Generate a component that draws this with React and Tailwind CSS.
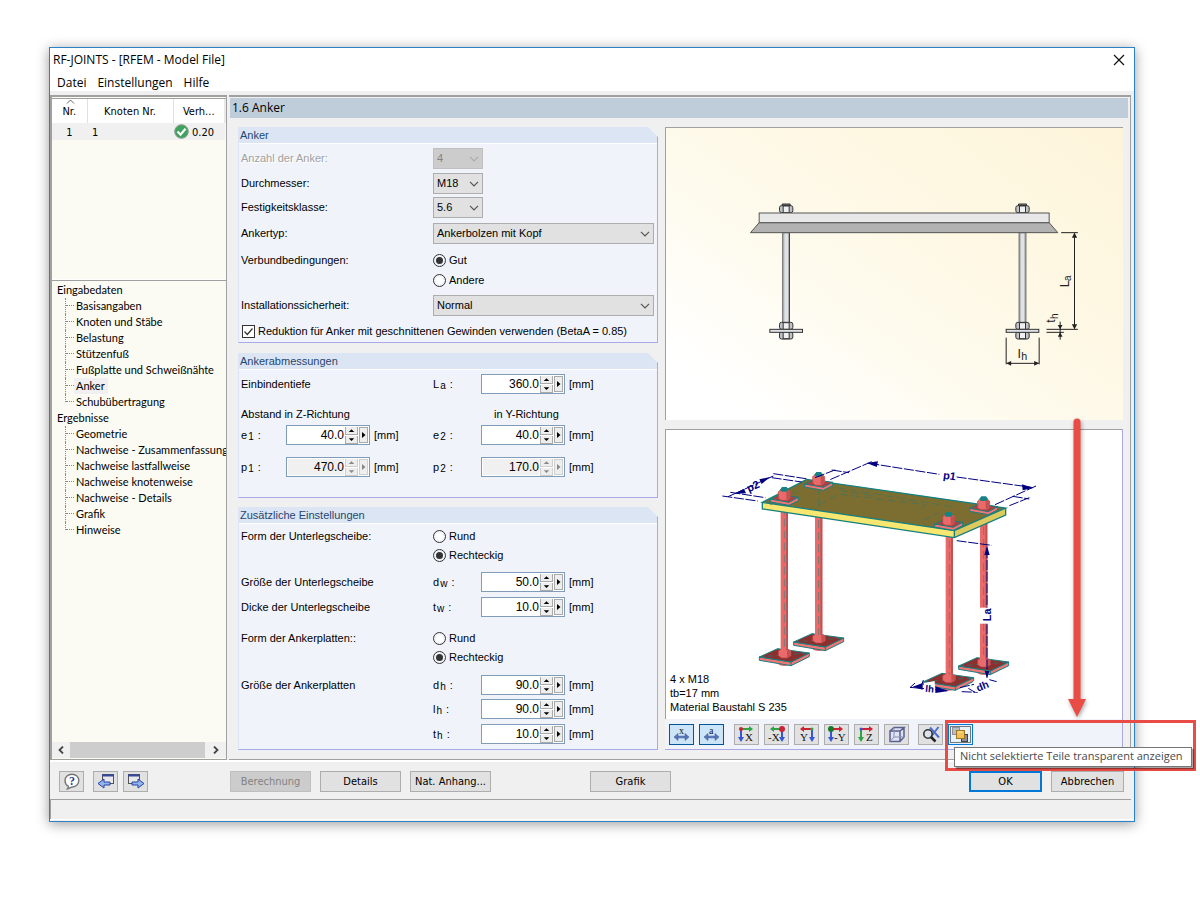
import { useState } from "react";

const INPUT_PAGES = [
  "Basisangaben",
  "Knoten und Stäbe",
  "Belastung",
  "Stützenfuß",
  "Fußplatte und Schweißnähte",
  "Anker",
  "Schubübertragung",
];

const RESULT_PAGES = [
  "Geometrie",
  "Nachweise - Zusammenfassung",
  "Nachweise lastfallweise",
  "Nachweise knotenweise",
  "Nachweise - Details",
  "Grafik",
  "Hinweise",
];

export default function App() {
  return (
    <div className="min-h-screen bg-white pt-[47px] pr-[65px] pb-10 pl-[49px] font-['DejaVu_Sans_Condensed','DejaVu_Sans',sans-serif] text-[11px] text-black">
      <div className="border border-[#2a82c9] bg-[#f0f0f0] shadow-[0_2px_12px_rgba(0,0,0,0.4)]">
        <TitleBar />
        <div className="mt-1 flex">
          <Sidebar />
          <main className="ml-[2px] min-w-0 flex-1 border-t-2 border-r border-b border-[#a0a0a0] pb-[9px]">
            <h1 className="mt-px mr-[2px] ml-px h-5 bg-[#bfcddb] pl-[2px] font-['Open_Sans',sans-serif] text-xs leading-5">
              1.6 Anker
            </h1>
            <div className="mt-[9px] flex gap-[7px] pr-[7px] pl-[9px]">
              <div className="flex w-[420px] shrink-0 flex-col">
                <AnchorGroup />
                <DimensionsGroup />
                <SettingsGroup />
              </div>
              <Preview />
            </div>
          </main>
          <div className="w-[3px] shrink-0" />
        </div>
        <ButtonBar />
        <div className="mr-[3px] h-5 border-t border-l border-[#a0a0a0]" />
        <div className="h-[2px] border-t border-white" />
      </div>
    </div>
  );
}

function TitleBar() {
  return (
    <header className="bg-white font-['Open_Sans',sans-serif] text-xs">
      <div className="flex h-6 items-center justify-between pr-[9px] pl-[3px]">
        <span>RF-JOINTS - [RFEM - Model File]</span>
        <button type="button" aria-label="Schließen">
          <svg width="12" height="12" viewBox="0 0 12 12" className="block">
            <path d="M1 1l10 10M11 1L1 11" stroke="#111" strokeWidth="1.2" />
          </svg>
        </button>
      </div>
      <nav className="flex h-[19px] items-center gap-[11px] pt-[2px] pl-[7px]">
        <button type="button">Datei</button>
        <button type="button">Einstellungen</button>
        <button type="button">Hilfe</button>
      </nav>
    </header>
  );
}

function Sidebar() {
  return (
    <aside className="flex w-[177px] shrink-0 flex-col border-t-2 border-r border-b border-l-2 border-[#a0a0a0] bg-[#fbfbf3]">
      <div className="mt-px h-[182px] border-t border-b border-t-[#a0a0a0] border-b-white">
        <table className="w-full table-fixed text-left">
          <thead>
            <tr className="h-6 bg-white">
              <th className="relative w-[35px] border-r border-[#e0e0e0] pt-[2px] text-center font-normal">
                <svg width="9" height="5" viewBox="0 0 9 5" className="absolute top-0 left-[14px]">
                  <path d="M1 4.500l3.500-3.500 3.500 3.500" fill="none" stroke="#666" />
                </svg>
                Nr.
              </th>
              <th className="w-[86px] border-r border-[#e0e0e0] pt-[2px] text-center font-normal">
                Knoten Nr.
              </th>
              <th className="border-r-2 border-[#e8e8e8] pt-[2px] text-center font-normal">
                Verh...
              </th>
            </tr>
          </thead>
          <tbody>
            <tr className="h-[17px] bg-[#f0f0f0] leading-[15px]">
              <td className="pt-[2px] text-center">1</td>
              <td className="pt-[2px] pl-[5px]">1</td>
              <td>
                <span className="flex items-center gap-[3px] pl-px">
                  <svg width="15" height="15" viewBox="0 0 15 15">
                    <circle cx="7.500" cy="7.500" r="6.800" fill="#3fa35f" stroke="#8a9a8e" />
                    <path d="M3.500 7.500l3 3.200 5-6" fill="none" stroke="#fff" strokeWidth="2.200" />
                  </svg>
                  <span className="pt-[2px]">0.20</span>
                </span>
              </td>
            </tr>
          </tbody>
        </table>
      </div>
      <nav className="flex-1 overflow-hidden border-t border-[#a0a0a0] pt-px pl-[5px] font-[Lato,sans-serif]">
        <TreeBranch title="Eingabedaten" pages={INPUT_PAGES} />
        <TreeBranch title="Ergebnisse" pages={RESULT_PAGES} />
      </nav>
      <div className="mb-px flex h-4 items-center bg-[#f0f0f0]">
        <button type="button" aria-label="Nach links" className="flex w-[18px] justify-center">
          <svg width="6" height="8" viewBox="0 0 6 8">
            <path d="M5 .5L1.500 4 5 7.500" fill="none" stroke="#444" strokeWidth="1.800" />
          </svg>
        </button>
        <div className="h-4 w-[135px] bg-[#cdcdcd]" />
        <button type="button" aria-label="Nach rechts" className="flex flex-1 justify-center">
          <svg width="6" height="8" viewBox="0 0 6 8">
            <path d="M1 .5L4.500 4 1 7.500" fill="none" stroke="#444" strokeWidth="1.800" />
          </svg>
        </button>
      </div>
    </aside>
  );
}

function TreeBranch({ title, pages }) {
  return (
    <div className="leading-4 whitespace-nowrap">
      <div>{title}</div>
      <ul className="pl-2">
        {pages.map((page, i) => (
          <li key={page} className="flex h-4">
            <span
              className={`w-px shrink-0 border-l border-dotted border-[#888] ${
                i === pages.length - 1 ? "h-2" : "h-4"
              }`}
            />
            <span className="h-2 w-2 shrink-0 border-b border-dotted border-[#888]" />
            <a
              href={`#${page}`}
              className={page === "Anker" ? "bg-[#f0f0f2] pr-[3px] pl-[2px]" : "pl-[2px]"}
            >
              {page}
            </a>
          </li>
        ))}
      </ul>
    </div>
  );
}

/* ---- form building blocks ---- */

function Group({ title, className, children }) {
  return (
    <section
      className={`border-r border-b border-l border-r-[#a9a9e8] border-b-[#a9a9e8] border-l-[#dce5f4] bg-[#f0f4fa] font-['Liberation_Sans',sans-serif] [clip-path:polygon(0_0,calc(100%-10px)_0,100%_10px,100%_100%,0_100%)] ${className}`}
    >
      <h2 className="h-[17px] border-b border-white bg-[#dce5f4] pl-px leading-4 text-[#1f4770]">
        {title}
      </h2>
      <div className="pl-[2px]">{children}</div>
    </section>
  );
}

function Row({ label, htmlFor, className, children }) {
  return (
    <div className={`flex items-center ${className}`}>
      <label htmlFor={htmlFor} className="w-[192px] shrink-0">
        {label}
      </label>
      {children}
    </div>
  );
}

function Dropdown({ id, value, wide, disabled }) {
  return (
    <div className={`relative h-[21px] ${wide ? "w-[221px]" : "w-[50px]"}`}>
      <select
        id={id}
        disabled={disabled}
        defaultValue={value}
        className={`block h-full w-full appearance-none rounded-none border pl-[3px] ${
          disabled
            ? "border-[#bfbfbf] bg-[#cccccc] text-[#838383] opacity-100"
            : "border-[#adadad] bg-[#e1e1e1]"
        }`}
      >
        <option>{value}</option>
      </select>
      <svg
        width="10"
        height="6"
        viewBox="0 0 10 6"
        className="pointer-events-none absolute top-2 right-1"
      >
        <path d="M1 .8l4 4 4-4" fill="none" stroke={disabled ? "#aaa" : "#555"} strokeWidth="1.200" />
      </svg>
    </div>
  );
}

function Radio({ name, label, checked }) {
  return (
    <label className="flex items-center gap-[3px]">
      <input
        type="radio"
        name={name}
        defaultChecked={checked}
        className="h-[13px] w-[13px] appearance-none rounded-full border border-[#333] bg-white bg-clip-content p-[2px] checked:bg-[#333]"
      />
      {label}
    </label>
  );
}

function Sym({ base, sub }) {
  return (
    <>
      {base}
      <span className="relative top-px mx-px text-[10px]">{sub}</span> :
    </>
  );
}

function NumberField({ id, base, sub, value, disabled, near }) {
  return (
    <div className={`flex items-center ${near ? "w-[192px]" : ""}`}>
      <label htmlFor={id} className={near ? "w-[45px] shrink-0" : "w-12 shrink-0"}>
        <Sym base={base} sub={sub} />
      </label>
      <div className="flex h-5 w-[84px] border border-[#7f9db9] bg-white p-px">
        <input
          id={id}
          type="text"
          defaultValue={value}
          disabled={disabled}
          className={`w-[57px] min-w-0 text-right text-xs ${disabled ? "bg-[#f0f0f0]" : "bg-white"}`}
        />
        <span className="ml-px flex w-[13px] shrink-0 flex-col gap-px">
          <StepButton label="Erhöhen" d="M6 2l3 3H3z" disabled={disabled} />
          <StepButton label="Verringern" d="M3 2h6l-3 3z" disabled={disabled} />
        </span>
        <button
          type="button"
          aria-label="Auswahl"
          disabled={disabled}
          className={`ml-px w-[9px] shrink-0 border bg-[#eeeeee] ${
            disabled ? "border-[#cfcfcf]" : "border-[#aaaaaa]"
          }`}
        >
          <svg width="7" height="14" viewBox="0 0 7 14">
            <path d="M2 4l3.500 3L2 10z" fill={disabled ? "#888" : "#000"} />
          </svg>
        </button>
      </div>
      <span className="ml-1">[mm]</span>
    </div>
  );
}

function StepButton({ label, d, disabled }) {
  return (
    <button
      type="button"
      aria-label={label}
      disabled={disabled}
      className={`flex-1 border-r border-b border-l bg-[#eeeeee] ${
        disabled ? "border-[#cfcfcf]" : "border-[#aaaaaa]"
      }`}
    >
      <svg width="11" height="7" viewBox="0 0 12 7" className="block">
        <path d={d} fill={disabled ? "#888" : "#000"} />
      </svg>
    </button>
  );
}

function AnchorGroup() {
  return (
    <Group title="Anker" className="h-[216px]">
      <div className="pt-[2px]">
        <Row
          className="h-[25px] text-[#a0a0a0] [text-shadow:1px_1px_0_#fff]"
          label="Anzahl der Anker:"
          htmlFor="count"
        >
          <Dropdown id="count" value="4" disabled />
        </Row>
        <Row className="h-[25px]" label="Durchmesser:" htmlFor="diameter">
          <Dropdown id="diameter" value="M18" />
        </Row>
        <Row className="h-[23px]" label="Festigkeitsklasse:" htmlFor="grade">
          <Dropdown id="grade" value="5.6" />
        </Row>
        <Row className="h-[29px]" label="Ankertyp:" htmlFor="type">
          <Dropdown id="type" value="Ankerbolzen mit Kopf" wide />
        </Row>
        <Row className="h-6" label="Verbundbedingungen:">
          <Radio name="bond" label="Gut" checked />
        </Row>
        <Row className="h-[17px]">
          <Radio name="bond" label="Andere" />
        </Row>
        <Row className="h-[33px]" label="Installationssicherheit:" htmlFor="safety">
          <Dropdown id="safety" value="Normal" wide />
        </Row>
        <label className="flex h-[18px] items-center gap-[3px] pl-px">
          <ThreadCheck />
          Reduktion für Anker mit geschnittenen Gewinden verwenden (BetaA = 0.85)
        </label>
      </div>
    </Group>
  );
}

function ThreadCheck() {
  const [on, setOn] = useState(true);
  return (
    <span className="relative h-[13px] w-[13px]">
      <input
        type="checkbox"
        checked={on}
        onChange={(e) => setOn(e.target.checked)}
        className="block h-[13px] w-[13px] appearance-none border border-[#333] bg-white"
      />
      {on && (
        <svg
          width="13"
          height="13"
          viewBox="0 0 13 13"
          className="pointer-events-none absolute inset-0"
        >
          <path d="M2.500 6.500l2.800 3 5.200-6" fill="none" stroke="#333" strokeWidth="1.200" />
        </svg>
      )}
    </span>
  );
}

function DimensionsGroup() {
  return (
    <Group title="Ankerabmessungen" className="mt-[10px] h-[145px]">
      <Row className="h-7" label="Einbindentiefe" htmlFor="la">
        <NumberField id="la" base="L" sub="a" value="360.0" />
      </Row>
      <div className="mt-2 flex h-4 items-center">
        <span className="w-[253px]">Abstand in Z-Richtung</span>
        <span>in Y-Richtung</span>
      </div>
      <div className="mt-[3px] flex h-5">
        <NumberField id="e1" base="e" sub="1" value="40.0" near />
        <NumberField id="e2" base="e" sub="2" value="40.0" />
      </div>
      <div className="mt-3 flex h-5">
        <NumberField id="p1" base="p" sub="1" value="470.0" near disabled />
        <NumberField id="p2" base="p" sub="2" value="170.0" disabled />
      </div>
    </Group>
  );
}

function SettingsGroup() {
  return (
    <Group title="Zusätzliche Einstellungen" className="mt-[9px] h-[243px]">
      <div className="pt-[3px]">
        <Row className="h-[19px]" label="Form der Unterlegscheibe:">
          <Radio name="washer" label="Rund" />
        </Row>
        <Row className="h-[19px]">
          <Radio name="washer" label="Rechteckig" checked />
        </Row>
        <Row className="mt-[7px] h-5" label="Größe der Unterlegscheibe" htmlFor="dw">
          <NumberField id="dw" base="d" sub="w" value="50.0" />
        </Row>
        <Row className="mt-[5px] h-5" label="Dicke der Unterlegscheibe" htmlFor="tw">
          <NumberField id="tw" base="t" sub="w" value="10.0" />
        </Row>
        <Row className="mt-3 h-[19px]" label="Form der Ankerplatten::">
          <Radio name="plate" label="Rund" />
        </Row>
        <Row className="h-[19px]">
          <Radio name="plate" label="Rechteckig" checked />
        </Row>
        <Row className="mt-2 h-5" label="Größe der Ankerplatten" htmlFor="dh">
          <NumberField id="dh" base="d" sub="h" value="90.0" />
        </Row>
        <Row className="mt-1 h-5">
          <NumberField id="lh" base="l" sub="h" value="90.0" />
        </Row>
        <Row className="mt-[5px] h-5">
          <NumberField id="th" base="t" sub="h" value="10.0" />
        </Row>
      </div>
    </Group>
  );
}

/* ---- graphics on the right ---- */

function Preview() {
  return (
    <div className="flex min-w-0 flex-1 flex-col">
      <div className="h-[293px] border-t border-l border-[#a0a0a0] bg-[linear-gradient(215deg,#fdf4da_0%,#fef8e4_35%,#fefbee_60%,#ffffff_90%)]">
        <SectionDrawing />
      </div>
      <div className="relative mt-[9px] border-r border-b border-[#a9a9e8] bg-[#f0f4fa]">
        <div className="relative h-[290px] border-t border-l border-[#a0a0a0] bg-white">
          <ModelDrawing />
          <div className="absolute bottom-[5px] left-1 font-['Liberation_Sans',sans-serif] leading-[14px]">
            <p>4 x M18</p>
            <p>tb=17 mm</p>
            <p>Material Baustahl S 235</p>
          </div>
        </div>
        <ViewToolbar />
        <Arrow />
      </div>
    </div>
  );
}

function Nut({ x, y, flip }) {
  return (
    <g transform={`translate(${x} ${y}) scale(1 ${flip ? -1 : 1})`} strokeWidth="3">
      {!flip && <path d="M-12-20v-7h24v7z" fill="#777" stroke="#333" strokeLinejoin="round" />}
      <rect x="-20" y="-22" width="40" height="21" rx="6" fill="#bfc3c6" stroke="#333" />
      <rect x="-9" y="-21" width="18" height="20" fill="#f0f0f0" stroke="#333" />
    </g>
  );
}

function Anchor({ x }) {
  return (
    <g>
      <rect x={x - 10} y="338" width="20" height="272" fill="#dfe3e5" stroke="#444" strokeWidth="3" />
      <path d={`M${x - 7} 338v270M${x + 7} 338v270`} stroke="#a9adb0" strokeWidth="3" />
      <Nut x={x} y={279} />
      <rect x={x - 20} y="607" width="40" height="21" rx="6" fill="#bfc3c6" stroke="#333" />
      <rect x={x - 9} y="608" width="18" height="20" fill="#f0f0f0" stroke="#333" />
      <Nut x={x} y={635} flip />
      <rect x={x - 49} y="628" width="98" height="9" fill="#dfe3e5" stroke="#333" strokeWidth="3" />
    </g>
  );
}

function SectionDrawing() {
  return (
    <svg
      viewBox="18 24 1368 876"
      className="block h-full w-full font-['Liberation_Sans',sans-serif]"
      stroke="#222"
      strokeWidth="3"
      aria-label="Schnitt durch die Fußplatte"
    >
      <Anchor x={377} />
      <Anchor x={1086} />
      <path d="M296 308h870l26 30H270z" fill="#b2b2b2" stroke="#555" />
      <rect x="296" y="279" width="870" height="29" fill="#e8e8e8" stroke="#555" />
      <path d="M1202 338h50M1242 340v286M1158 628h94M1158 637h52M1199 605v54" />
      <path d="M1037 653v80M1136 653v80M1040 730h94" />
      <path
        d="M1242 338l-8 15h16zM1242 628l-8-15h16zM1199 628l-7-13h14zM1199 637l-7 13h14zM1037 730l15-7v14zM1136 730l-15-7v14z"
        fill="#222"
        stroke="none"
      />
      <g fill="#222" stroke="none">
        <text x="1072" y="713" fontSize="40">l</text>
        <text x="1082" y="721" fontSize="32">h</text>
        <text transform="translate(1224 502) rotate(-90)" fontSize="38">L</text>
        <text transform="translate(1231 483) rotate(-90)" fontSize="30">a</text>
        <text transform="translate(1184 608) rotate(-90)" fontSize="36">t</text>
        <text transform="translate(1192 597) rotate(-90)" fontSize="30">h</text>
      </g>
    </svg>
  );
}

function Rod({ x, top, bottom }) {
  return (
    <g>
      <rect x={x - 11} y={top} width="22" height={bottom - top} fill="#ea6a6a" />
      <rect x={x + 5} y={top} width="6" height={bottom - top} fill="#c25252" />
      <path d={`M${x} ${top}V${bottom}`} stroke="#777" strokeWidth="3" strokeDasharray="24 12" />
    </g>
  );
}

function FootPlate({ x, y }) {
  return (
    <g transform={`translate(${x} ${y})`} strokeLinejoin="round">
      <ellipse cx="0" cy="24" rx="18" ry="7" fill="#ea6a6a" />
      <path d="M-75 4v10l95 16 55-27V-8L20 19z" fill="#f27474" stroke="#168080" strokeWidth="3" />
      <path d="M-75 4L-20-21l95 13L20 19z" fill="#8b2f2f" stroke="#168080" strokeWidth="3" />
      <path d="M-75 4L75-8M-20-21L20 19" stroke="#168080" strokeWidth="2" strokeDasharray="16 10" />
      <path d="M-18-14l10-6h18l10 6v14L8 7h-16l-10-7z" fill="#ea6a6a" stroke="#b34646" strokeWidth="2" />
      <path d="M8-19v25l11-7v-12z" fill="#c25252" />
      <path d="M20 19v11" stroke="#168080" strokeWidth="3" />
    </g>
  );
}

function BoltHead({ x, y }) {
  return (
    <g transform={`translate(${x} ${y})`} strokeLinejoin="round">
      <path d="M-42 0v9L14 19l28-14V-5z" fill="#f27474" stroke="#168080" strokeWidth="3" />
      <path d="M-42 0l28-13 56 8L14 10z" fill="#a94242" stroke="#168080" strokeWidth="3" />
      <path d="M-18-22l8-7h20l8 7v19L9 4h-18l-9-6z" fill="#ea6a6a" stroke="#b34646" strokeWidth="2" />
      <path d="M6-28V3l11-7v-18z" fill="#c25252" />
      <path d="M-13-28l6-8H7l6 8-7 6H-8z" fill="#178282" />
    </g>
  );
}

function ModelDrawing() {
  return (
    <svg
      viewBox="18 15 1368 867"
      className="block h-full w-full font-['Liberation_Sans',sans-serif]"
      aria-label="3D-Modell der Verankerung"
    >
      <FootPlate x={476} y={647} />
      <FootPlate x={373} y={692} />
      <FootPlate x={971} y={719} />
      <FootPlate x={866} y={766} />
      <Rod x={476} top={250} bottom={630} />
      <Rod x={373} top={245} bottom={675} />
      <Rod x={971} top={270} bottom={702} />
      <Rod x={868} top={310} bottom={749} />

      {/* base plate */}
      <path d="M307 232l576 85v21L307 252z" fill="#f7e66f" />
      <path d="M883 317l154-68v21l-154 68z" fill="#dccb5c" />
      <path d="M307 232L440 163l597 86-154 68z" fill="#7c6d30" />
      <path
        d="M307 232L440 163l597 86-154 68zM307 232v20l576 86 154-68v-21M883 317v21"
        fill="none"
        stroke="#168080"
        strokeWidth="4"
      />
      <path
        d="M476 185v65M476 240l58-33 262 32-22 26M497 182l384 64M540 196l95 16M790 285l46-21M330 240l80-40"
        fill="none"
        stroke="#3f7560"
        strokeWidth="2"
        strokeDasharray="24 12"
      />
      <BoltHead x={476} y={177} />
      <BoltHead x={373} y={222} />
      <BoltHead x={971} y={250} />
      <BoltHead x={866} y={297} />

      {/* dimension lines */}
      <g fill="none" stroke="#000080" strokeWidth="3" strokeDasharray="30 5">
        <path d="M628 115l210 33M890 156l225 31M635 110l-125 54M1128 183l-125 57M1108 218l-60 24M1058 214l50 8" />
        <path d="M222 207l118-54M335 158l90 13M340 146l104 16M187 213l106 15M211 202l105 16M222 207l-18 8M465 158l65-25M515 135l52 8" />
        <path d="M890 347l105 14M981 370v178M981 598v160M988 764l22 6" />
        <path d="M750 787l110 10M765 774l-15 14M790 765l-6 18M900 788l50-12M905 800l48 2M925 790l20 12" />
      </g>
      <rect x="960" y="548" width="36" height="48" fill="#fff" />
      <path d="M792 774l32-6 2 34-34 2zM940 768l44-8 8 36-46 6z" fill="#fff" />
      <path
        d="M620 114l34-5-4 17zM1120 189l-34-11 2 18zM224 206l28-15 6 14zM330 156l-32 7 7 14zM981 362l-8 28h16zM981 760l-7-22h14zM758 785l30-11v20zM866 798l-40-14v20z"
        fill="#000080"
      />
      <g fill="#000080" fontWeight="700" fontSize="33">
        <text transform="translate(848 161) rotate(8)">p1</text>
        <text transform="translate(266 202) rotate(-24)">p2</text>
        <text transform="translate(993 589) rotate(-90)">La</text>
        <text transform="translate(795 800) rotate(6)" fontSize="29">lh</text>
        <text transform="translate(954 800) rotate(-22)" fontSize="31">dh</text>
      </g>
    </svg>
  );
}

/* red pointer from the model down to the last tool */
function Arrow() {
  return (
    <svg
      width="24"
      height="304"
      viewBox="0 0 24 304"
      className="pointer-events-none absolute -top-3 right-[33px] drop-shadow-[1px_2px_2px_rgba(0,0,0,0.35)]"
    >
      <path d="M12 5v280" stroke="#e94b45" strokeWidth="7" strokeLinecap="round" />
      <path d="M3 282h18l-9 18z" fill="#e94b45" />
    </svg>
  );
}

function AxisIcon({ hColor, vColor, dot, left, right, text, textX }) {
  // right: the vertical arrow stands on the right side
  const vx = right ? 17 : 6;
  return (
    <svg width="23" height="19" viewBox="0 0 23 19" className="block">
      <path d={left ? "M17 4H8" : "M6 4h9"} stroke={hColor} strokeWidth="2" />
      <path d={left ? "M5 4l4-3v6z" : "M18 4l-4-3v6z"} fill={hColor} />
      <path d={`M${vx} 4v9`} stroke={vColor} strokeWidth="2" />
      <path d={`M${vx} 17l-3-5h6z`} fill={vColor} />
      <circle cx={vx} cy="4" r={dot.r} fill={dot.color} />
      <text
        x={textX}
        y="16"
        fontSize="11"
        fill="#111"
        className="font-['Liberation_Serif',serif]"
      >
        {text}
      </text>
    </svg>
  );
}

function MarkIcon({ text }) {
  return (
    <svg width="23" height="19" viewBox="0 0 23 19" className="block">
      <text x="9" y="9" fontSize="10" fill="#111" className="font-['Liberation_Serif',serif]">
        {text}
      </text>
      <path d="M7 12h9" stroke="#5b78bb" strokeWidth="2.500" />
      <path d="M4 12l4-3.500v7zM19 12l-4-3.500v7z" fill="#5b78bb" stroke="#3c508a" strokeWidth=".5" />
    </svg>
  );
}

const TOOL =
  "flex h-[21px] w-[25px] items-center justify-center border border-[#adadad] bg-[#e1e1e1]";
const TOOL_ON =
  "flex h-[21px] w-[25px] items-center justify-center border border-[#00559b] bg-[#cce4f7]";

const RED = "#cc2233";
const GREEN = "#2fa343";
const BLUE = "#3556d8";

function ViewToolbar() {
  return (
    <div className="flex h-[30px] items-center gap-[5px] pl-1">
      <button type="button" className={TOOL_ON} aria-label="Bemaßung">
        <MarkIcon text="x" />
      </button>
      <button type="button" className={TOOL_ON} aria-label="Bezeichnungen">
        <MarkIcon text="a" />
      </button>
      <div className="ml-[5px] flex gap-[5px]">
        <button type="button" className={TOOL} aria-label="Ansicht X">
          <AxisIcon hColor={GREEN} vColor={BLUE} dot={{ r: 2, color: RED }} text="X" textX={10} />
        </button>
        <button type="button" className={TOOL} aria-label="Ansicht -X">
          <AxisIcon hColor={GREEN} vColor={BLUE} dot={{ r: 3, color: RED }} left right text="-X" textX={3} />
        </button>
        <button type="button" className={TOOL} aria-label="Ansicht Y">
          <AxisIcon hColor={RED} vColor={BLUE} dot={{ r: 1.5, color: GREEN }} left right text="Y" textX={5} />
        </button>
        <button type="button" className={TOOL} aria-label="Ansicht -Y">
          <AxisIcon hColor={RED} vColor={BLUE} dot={{ r: 3, color: "#187a28" }} text="-Y" textX={9} />
        </button>
        <button type="button" className={TOOL} aria-label="Ansicht Z">
          <AxisIcon hColor={RED} vColor={GREEN} dot={{ r: 1.5, color: BLUE }} text="Z" textX={11} />
        </button>
        <button type="button" className={TOOL} aria-label="Isometrie">
          <svg width="18" height="17" viewBox="0 0 18 17" fill="none" stroke="#59628f">
            <path d="M2 5h10v10.500H2zM2 5l4-3.500h10L12 5M16 1.500V11l-4 4.500" fill="#dfe3f5" strokeWidth="1.500" />
            <path d="M6 1.500V11h10M6 11l-4 4.500" stroke="#8890b5" />
          </svg>
        </button>
      </div>
      <button type="button" className={`ml-1 ${TOOL}`} aria-label="Alles zeigen">
        <svg width="18" height="17" viewBox="0 0 18 17" fill="none">
          <path d="M8 1.500l9 10M16.500 1L8 12" stroke="#4a6fd0" strokeWidth="2" />
          <circle cx="6" cy="8" r="4.200" fill="#d9e2ee" fillOpacity=".6" stroke="#333" strokeWidth="1.600" />
          <path d="M9 11l4.500 4.500" stroke="#222" strokeWidth="2.500" />
        </svg>
      </button>
      <div className="relative">
        <button
          type="button"
          aria-label="Transparenz"
          aria-describedby="tool-tip"
          className="flex h-[21px] w-[25px] items-center justify-center border border-[#0078d7] bg-[#e5f1fb]"
        >
          <svg width="23" height="19" viewBox="0 0 23 19">
            <rect x="1.500" y="1.500" width="20" height="16" fill="none" stroke="#000" strokeDasharray="1 1" />
            <rect x="3.500" y="2.500" width="7" height="7" fill="#b9bdc4" stroke="#8f949c" />
            <rect x="12.500" y="9.500" width="6" height="7" fill="#8c9098" stroke="#3e4248" />
            <rect x="7.500" y="5.500" width="8" height="8" fill="#f2c25a" stroke="#a4731c" />
            <path d="M8.500 7h5" stroke="#ffe9a8" />
          </svg>
        </button>
        <div className="absolute -top-1 -left-[3px] z-10 h-[51px] w-[251px] border-[3px] border-[#e94b45]" />
        <div
          id="tool-tip"
          role="tooltip"
          className="absolute top-[23px] left-[6px] z-20 flex h-5 w-[238px] items-center border border-[#767676] bg-white pl-[5px] font-['Open_Sans',sans-serif] text-[11px] whitespace-nowrap text-[#4a4a4a] shadow-[2px_2px_1px_rgba(0,0,0,0.35)]"
        >
          Nicht selektierte Teile transparent anzeigen
        </div>
      </div>
    </div>
  );
}

/* ---- bottom bar ---- */

const BUTTON = "h-[21px] w-[81px] border border-[#adadad] bg-[#e1e1e1] pt-px";

function ButtonBar() {
  return (
    <footer className="flex h-[39px] items-center border-t-2 border-white pt-[2px] pr-[10px] pl-[9px]">
      <button type="button" className={TOOL} aria-label="Hilfe">
        <svg width="18" height="17" viewBox="0 0 18 17">
          <path
            d="M9 1.200c4 0 6.800 2.800 6.800 6.300S13 14 9.500 14c-2 0-3 1.500-5 1.800.7-.8 1-1.600.8-2.600C3.300 12 2 10 2 7.700 2 4 5 1.200 9 1.200z"
            fill="#fff"
            stroke="#777"
            strokeWidth="1.400"
          />
          <text x="6" y="12" fontSize="12" fontWeight="700" fill="#2a3f92" className="font-['Liberation_Serif',serif]">
            ?
          </text>
        </svg>
      </button>
      <button type="button" className={`ml-[9px] ${TOOL}`} aria-label="Vorherige Maske">
        <svg width="18" height="17" viewBox="0 0 18 17">
          <rect x="5.500" y="1.500" width="11" height="9" fill="#e9e9ec" stroke="#555" />
          <path d="M5 1.500h12v2H5z" fill="#3349a0" />
          <path d="M1 10.500l6-4.500v3h6v3H7v3z" fill="#8fb4f2" stroke="#2a459c" />
        </svg>
      </button>
      <button type="button" className={`ml-[5px] ${TOOL}`} aria-label="Nächste Maske">
        <svg width="18" height="17" viewBox="0 0 18 17">
          <rect x="1.500" y="1.500" width="11" height="9" fill="#e9e9ec" stroke="#555" />
          <path d="M1 1.500h12v2H1z" fill="#3349a0" />
          <path d="M17 10.500l-6-4.500v3H5v3h6v3z" fill="#8fb4f2" stroke="#2a459c" />
        </svg>
      </button>
      <div className="ml-[82px] flex gap-[9px]">
        <button
          type="button"
          disabled
          className="h-[21px] w-[81px] border border-[#bfbfbf] bg-[#cccccc] pt-px text-[#838383]"
        >
          Berechnung
        </button>
        <button type="button" className={BUTTON}>
          Details
        </button>
        <button type="button" className={BUTTON}>
          Nat. Anhang...
        </button>
      </div>
      <button type="button" className={`ml-[99px] ${BUTTON}`}>
        Grafik
      </button>
      <div className="ml-auto flex gap-[9px]">
        <button
          type="button"
          className="h-[21px] w-[73px] border-2 border-[#0078d7] bg-[#e1e1e1] pt-px"
        >
          OK
        </button>
        <button
          type="button"
          className="h-[21px] w-[73px] border border-[#adadad] bg-[#e1e1e1] pt-px"
        >
          Abbrechen
        </button>
      </div>
    </footer>
  );
}
